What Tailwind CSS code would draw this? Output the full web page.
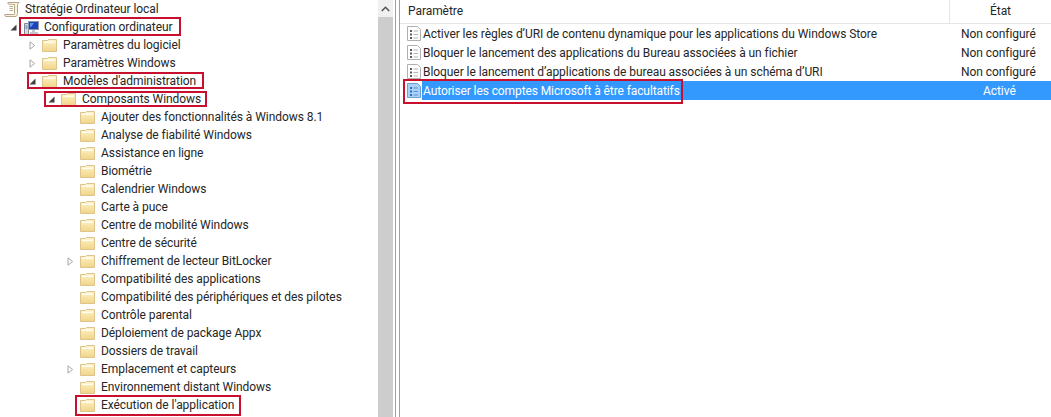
<!DOCTYPE html>
<html lang="fr"><head><meta charset="utf-8"><script src="https://cdn.jsdelivr.net/npm/@tailwindcss/browser@4"></script></head>
<body class="bg-white">
<svg width="0" height="0" class="absolute">
<defs>
<linearGradient id="fg" x1="0" y1="0" x2="0" y2="1"><stop offset="0" stop-color="#fdf3c8"/><stop offset="1" stop-color="#f1d489"/></linearGradient>
<symbol id="folder" viewBox="0 0 15 14"><path d="M.5 2.500V13.500H14.500V1.500H6.500L5.500 2.500Z" fill="url(#fg)" stroke="#dcc48a"/><path d="M2 3.500H13V5H2Z" fill="#fffdf2"/></symbol>
<symbol id="closed" viewBox="0 0 7 9"><path d="M1 .8L5.600 4.500L1 8.200Z" fill="#fff" stroke="#a6a6a6"/></symbol>
<symbol id="open" viewBox="0 0 7 7"><path d="M6.500 .5V6.500H.5Z" fill="#404040"/></symbol>
<symbol id="doc" viewBox="0 0 14 15"><path d="M.5.5H10.500L13.500 3.500V14.500H.5Z" fill="#fff" stroke="#b0b0b0"/><path d="M3 4H5V6H3ZM3 7.500H5V9.500H3ZM3 11H5V13H3Z" fill="#5a5a5a"/><path d="M6.500 5H11M6.500 8.500H11M6.500 12H11" stroke="#b4b4b4"/></symbol>
<symbol id="docsel" viewBox="0 0 14 15"><path d="M.5.5H10.500L13.500 3.500V14.500H.5Z" fill="#a9d1fa" stroke="#6f9fd4"/><path d="M3 4H5V6H3ZM3 7.500H5V9.500H3ZM3 11H5V13H3Z" fill="#2a6fc0"/><path d="M6.500 5H11M6.500 8.500H11M6.500 12H11" stroke="#5a95d6"/></symbol>
</defs></svg>
<div class="relative flex h-[417px] w-[1051px] overflow-hidden bg-white font-['Roboto',sans-serif] text-[12px] leading-[18px] tracking-[-0.06px] text-[#262626]">
  <div class="w-[378px] shrink-0 overflow-hidden">
    <div class="flex h-[18px] items-center pl-[4px]"><svg class="mr-[4px] h-[17px] w-[17px] shrink-0" viewBox="0 0 17 17"><path d="M4 1.500H15L13.500 3.500V12.500C13.500 14.500 12.500 15.500 11 15.500H2C1 15.500 .5 14.500 .8 13.500H9.500C10 14.500 10.500 13.500 10.500 12.500V3.500C3.500 3.500 3 2.500 4 1.500Z" fill="#f8f2dc" stroke="#b5a888"/><path d="M5.500 5.500H9M5.500 7.500H9M5.500 9.500H9" stroke="#b8ad92"/></svg><span>Stratégie Ordinateur local</span></div>
    <div class="flex h-[18px] items-center pl-[7px]"><svg class="h-[7px] w-[7px] shrink-0 ml-[3px] mr-[7px]"><use href="#open"/></svg><svg class="mr-[5px] h-[15px] w-[15px] shrink-0" viewBox="0 0 15 15"><path d="M.5 3.500H4.500V14.500H.5Z" fill="#d6d9dd" stroke="#7f8893"/><path d="M1.500 6H3.500M1.500 8H3.500" stroke="#4a6fae"/><rect x="4.500" y="1.500" width="10" height="8" fill="#1d43b5" stroke="#8a97ad"/><path d="M6 3H10L7 7H6Z" fill="#5d92ee"/><path d="M8 10H11V12H14V14H6V12H8Z" fill="#c3c8cf"/></svg><span>Configuration ordinateur</span></div>
    <div class="flex h-[18px] items-center pl-[29px]"><svg class="h-[9px] w-[7px] shrink-0 mr-[6px]"><use href="#closed"/></svg><svg class="mr-[6px] h-[14px] w-[15px] shrink-0"><use href="#folder"/></svg><span>Paramètres du logiciel</span></div>
    <div class="flex h-[18px] items-center pl-[29px]"><svg class="h-[9px] w-[7px] shrink-0 mr-[6px]"><use href="#closed"/></svg><svg class="mr-[6px] h-[14px] w-[15px] shrink-0"><use href="#folder"/></svg><span>Paramètres Windows</span></div>
    <div class="flex h-[18px] items-center pl-[29px]"><svg class="h-[7px] w-[7px] shrink-0 mr-[6px]"><use href="#open"/></svg><svg class="mr-[6px] h-[14px] w-[15px] shrink-0"><use href="#folder"/></svg><span>Modèles d'administration</span></div>
    <div class="flex h-[18px] items-center pl-[48px]"><svg class="h-[7px] w-[7px] shrink-0 mr-[6px]"><use href="#open"/></svg><svg class="mr-[6px] h-[14px] w-[15px] shrink-0"><use href="#folder"/></svg><span>Composants Windows</span></div>
    <div class="flex h-[18px] items-center pl-[80px]"><svg class="mr-[6px] h-[14px] w-[15px] shrink-0"><use href="#folder"/></svg><span>Ajouter des fonctionnalités à Windows 8.1</span></div>
    <div class="flex h-[18px] items-center pl-[80px]"><svg class="mr-[6px] h-[14px] w-[15px] shrink-0"><use href="#folder"/></svg><span>Analyse de fiabilité Windows</span></div>
    <div class="flex h-[18px] items-center pl-[80px]"><svg class="mr-[6px] h-[14px] w-[15px] shrink-0"><use href="#folder"/></svg><span>Assistance en ligne</span></div>
    <div class="flex h-[18px] items-center pl-[80px]"><svg class="mr-[6px] h-[14px] w-[15px] shrink-0"><use href="#folder"/></svg><span>Biométrie</span></div>
    <div class="flex h-[18px] items-center pl-[80px]"><svg class="mr-[6px] h-[14px] w-[15px] shrink-0"><use href="#folder"/></svg><span>Calendrier Windows</span></div>
    <div class="flex h-[18px] items-center pl-[80px]"><svg class="mr-[6px] h-[14px] w-[15px] shrink-0"><use href="#folder"/></svg><span>Carte à puce</span></div>
    <div class="flex h-[18px] items-center pl-[80px]"><svg class="mr-[6px] h-[14px] w-[15px] shrink-0"><use href="#folder"/></svg><span>Centre de mobilité Windows</span></div>
    <div class="flex h-[18px] items-center pl-[80px]"><svg class="mr-[6px] h-[14px] w-[15px] shrink-0"><use href="#folder"/></svg><span>Centre de sécurité</span></div>
    <div class="flex h-[18px] items-center pl-[67px]"><svg class="h-[9px] w-[7px] shrink-0 mr-[6px]"><use href="#closed"/></svg><svg class="mr-[6px] h-[14px] w-[15px] shrink-0"><use href="#folder"/></svg><span>Chiffrement de lecteur BitLocker</span></div>
    <div class="flex h-[18px] items-center pl-[80px]"><svg class="mr-[6px] h-[14px] w-[15px] shrink-0"><use href="#folder"/></svg><span>Compatibilité des applications</span></div>
    <div class="flex h-[18px] items-center pl-[80px]"><svg class="mr-[6px] h-[14px] w-[15px] shrink-0"><use href="#folder"/></svg><span>Compatibilité des périphériques et des pilotes</span></div>
    <div class="flex h-[18px] items-center pl-[80px]"><svg class="mr-[6px] h-[14px] w-[15px] shrink-0"><use href="#folder"/></svg><span>Contrôle parental</span></div>
    <div class="flex h-[18px] items-center pl-[80px]"><svg class="mr-[6px] h-[14px] w-[15px] shrink-0"><use href="#folder"/></svg><span>Déploiement de package Appx</span></div>
    <div class="flex h-[18px] items-center pl-[80px]"><svg class="mr-[6px] h-[14px] w-[15px] shrink-0"><use href="#folder"/></svg><span>Dossiers de travail</span></div>
    <div class="flex h-[18px] items-center pl-[67px]"><svg class="h-[9px] w-[7px] shrink-0 mr-[6px]"><use href="#closed"/></svg><svg class="mr-[6px] h-[14px] w-[15px] shrink-0"><use href="#folder"/></svg><span>Emplacement et capteurs</span></div>
    <div class="flex h-[18px] items-center pl-[80px]"><svg class="mr-[6px] h-[14px] w-[15px] shrink-0"><use href="#folder"/></svg><span>Environnement distant Windows</span></div>
    <div class="flex h-[18px] items-center pl-[80px]"><svg class="mr-[6px] h-[14px] w-[15px] shrink-0"><use href="#folder"/></svg><span>Exécution de l'application</span></div>
  </div>
  <div class="flex w-[15px] shrink-0 flex-col bg-[#cdcdcd]">
    <div class="flex h-[17px] items-center justify-center bg-[#f0f0f0]"><svg class="h-[6px] w-[9px]" viewBox="0 0 9 6"><path d="M.8 5L4.500 1.300L8.200 5" fill="none" stroke="#505050" stroke-width="1.500"/></svg></div>
  </div>
  <div class="ml-[2px] w-[5px] shrink-0 border-x border-[#a0a0a0]"></div>
  <div class="min-w-0 flex-1">
    <div class="flex h-[24px] border-b border-[#e5e5e5]">
      <div class="flex-1 border-r border-[#e5e5e5] pl-[8px] leading-[23px]">Paramètre</div>
      <div class="w-[101px] text-center leading-[23px]">État</div>
    </div>
    <div class="flex h-[19px] items-center pl-[7px]"><svg class="mr-[2px] h-[15px] w-[14px] shrink-0"><use href="#doc"/></svg><span class="flex-1">Activer les règles d’URI de contenu dynamique pour les applications du Windows Store</span><span class="w-[90px] shrink-0">Non configuré</span></div>
    <div class="flex h-[19px] items-center pl-[7px]"><svg class="mr-[2px] h-[15px] w-[14px] shrink-0"><use href="#doc"/></svg><span class="flex-1">Bloquer le lancement des applications du Bureau associées à un fichier</span><span class="w-[90px] shrink-0">Non configuré</span></div>
    <div class="flex h-[19px] items-center pl-[7px]"><svg class="mr-[2px] h-[15px] w-[14px] shrink-0"><use href="#doc"/></svg><span class="flex-1">Bloquer le lancement d’applications de bureau associées à un schéma d’URI</span><span class="w-[90px] shrink-0">Non configuré</span></div>
    <div class="flex h-[19px] items-center pl-[7px]"><svg class="mr-[1px] h-[15px] w-[14px] shrink-0"><use href="#docsel"/></svg><span class="flex h-full flex-1 items-center bg-[#3399ff] pl-[1px] text-white"><span class="tracking-[-0.1px]">Autoriser les comptes Microsoft à être facultatifs</span><span class="ml-auto w-[90px] pl-[22px]">Activé</span></span></div>
  </div>
  <div class="absolute left-[19px] top-[17px] h-[19px] w-[162px] border-2 border-[#c8102e]"></div>
  <div class="absolute left-[27px] top-[72px] h-[17px] w-[177px] border-2 border-[#c8102e]"></div>
  <div class="absolute left-[44px] top-[91px] h-[16px] w-[163px] border-2 border-[#c8102e]"></div>
  <div class="absolute left-[75px] top-[395px] h-[21px] w-[166px] border-2 border-[#c8102e]"></div>
  <div class="absolute left-[403px] top-[79px] h-[25px] w-[280px] border-2 border-[#c8102e]"></div>
</div>
</body></html>
